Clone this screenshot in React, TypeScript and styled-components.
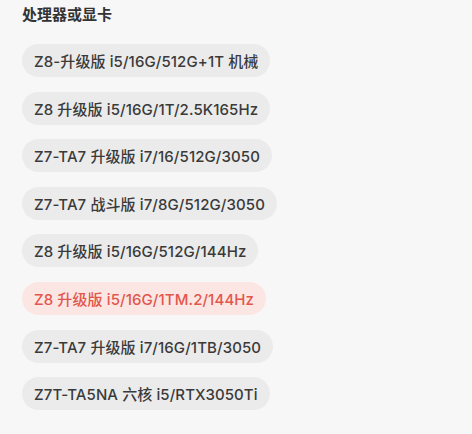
import styled, { createGlobalStyle } from "styled-components";

const GlobalStyle = createGlobalStyle`
  html, body {
    margin: 0;
    padding: 0;
    background: #f7f7f7;
  }
  body {
    font-family: Inter, "Noto Sans CJK SC", sans-serif;
  }
`;

const Panel = styled.section`
  width: 472px;
  height: 434px;
  box-sizing: border-box;
  padding: 5px 22px 0;
  background: #f7f7f7;
`;

const Title = styled.h3`
  margin: 0 0 19px;
  font-size: 15px;
  line-height: 20px;
  font-weight: 700;
  color: #333333;
`;

const OptionList = styled.div`
  display: flex;
  flex-direction: column;
  align-items: flex-start;
  gap: 14.6px;
`;

interface ChipProps {
  $selected?: boolean;
}

const Chip = styled.button<ChipProps>`
  height: 33px;
  padding: 0 12px;
  border: none;
  border-radius: 17px;
  font-family: Inter, "Noto Sans CJK SC", sans-serif;
  font-size: 15px;
  font-weight: 500;
  letter-spacing: 0.1px;
  color: ${({ $selected }) => ($selected ? "#e2574c" : "#3a3a3a")};
  background: ${({ $selected }) => ($selected ? "#fbe6e4" : "#ebebeb")};
  cursor: pointer;
  white-space: nowrap;
`;

const options = [
  "Z8-升级版 i5/16G/512G+1T 机械",
  "Z8 升级版 i5/16G/1T/2.5K165Hz",
  "Z7-TA7 升级版 i7/16/512G/3050",
  "Z7-TA7 战斗版 i7/8G/512G/3050",
  "Z8 升级版 i5/16G/512G/144Hz",
  "Z8 升级版 i5/16G/1TM.2/144Hz",
  "Z7-TA7 升级版 i7/16G/1TB/3050",
  "Z7T-TA5NA 六核 i5/RTX3050Ti",
];

export default function App() {
  const selected = 5;
  return (
    <>
      <GlobalStyle />
      <Panel>
        <Title>处理器或显卡</Title>
        <OptionList>
          {options.map((label, i) => (
            <Chip key={label} $selected={i === selected}>
              {label}
            </Chip>
          ))}
        </OptionList>
      </Panel>
    </>
  );
}
